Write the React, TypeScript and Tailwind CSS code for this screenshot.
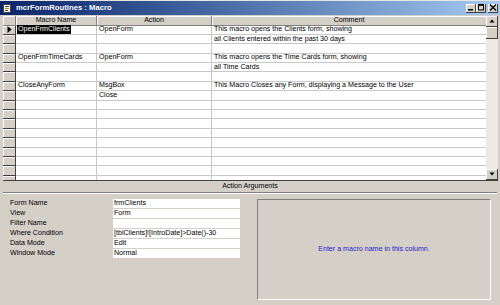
import React from 'react';

const rows: { name?: string; action?: string; comment?: string }[] = [
    { name: 'OpenFrmClients', action: 'OpenForm', comment: 'This macro opens the Clients form, showing' },
    { comment: 'all Clients entered within the past 30 days' },
    {},
    { name: 'OpenFrmTimeCards', action: 'OpenForm', comment: 'This macro opens the Time Cards form, showing' },
    { comment: 'all Time Cards' },
    {},
    { name: 'CloseAnyForm', action: 'MsgBox', comment: 'This Macro Closes any Form, displaying a Message to the User' },
    { action: 'Close' },
    {}, {}, {}, {}, {}, {}, {}, {}, {}, {},
];

const args = [
    { label: 'Form Name', value: 'frmClients' },
    { label: 'View', value: 'Form' },
    { label: 'Filter Name', value: '' },
    { label: 'Where Condition', value: '[tblClients]![IntroDate]>Date()-30' },
    { label: 'Data Mode', value: 'Edit' },
    { label: 'Window Mode', value: 'Normal' },
];

function TitleButton({ kind }: { kind: 'min' | 'max' | 'close' }) {
    return (
        <div className="w-[10px] h-[9px] bg-[#d4d0c8] border-r border-b border-[#404040] shadow-[inset_1px_1px_0_#fff] flex items-center justify-center">
            <svg width="8" height="7" viewBox="0 0 8 7">
                {kind === 'min' && <rect x="1" y="5" width="5" height="1.5" fill="#000" />}
                {kind === 'max' && (
                    <g fill="none" stroke="#000">
                        <rect x="1.5" y="0.5" width="5" height="5.5" />
                        <line x1="1.5" y1="1.3" x2="6.5" y2="1.3" />
                    </g>
                )}
                {kind === 'close' && (
                    <g stroke="#000" strokeWidth="1.3">
                        <line x1="1" y1="0.5" x2="7" y2="6.5" />
                        <line x1="7" y1="0.5" x2="1" y2="6.5" />
                    </g>
                )}
            </svg>
        </div>
    );
}

function ScrollArrow({ up }: { up?: boolean }) {
    return (
        <div className="h-[11px] bg-[#d4d0c8] border-r border-b border-[#404040] shadow-[inset_1px_1px_0_#fff] flex items-center justify-center shrink-0">
            <svg width="6" height="4" viewBox="0 0 6 4">
                <polygon points={up ? '3,0.5 0.5,3.5 5.5,3.5' : '0.5,0.5 5.5,0.5 3,3.5'} fill="#000" />
            </svg>
        </div>
    );
}

export default function App() {
    return (
        <div
            className="w-[500px] h-[305px] bg-[#d4d0c8] overflow-hidden flex flex-col text-[7.1px] text-black leading-none"
            style={{ fontFamily: '"Liberation Sans", Arial, sans-serif' }}
        >
            {/* title bar */}
            <div className="h-[15px] shrink-0 border-t border-[#e8e6e0] bg-gradient-to-r from-[#0a246a] to-[#a6caf0] flex items-center pl-[3px] pr-[2px]">
                <svg width="9" height="9" viewBox="0 0 9 9" className="shrink-0">
                    <rect x="0.5" y="0.5" width="7" height="8" fill="#fff" stroke="#404040" />
                    <rect x="2" y="2" width="4" height="1" fill="#404040" />
                    <rect x="2" y="4" width="4" height="1" fill="#c08000" />
                    <rect x="2" y="6" width="3" height="1" fill="#404040" />
                </svg>
                <span className="ml-[4px] text-white font-bold text-[7.7px]">mcrFormRoutines : Macro</span>
                <div className="ml-auto flex items-center">
                    <TitleButton kind="min" />
                    <TitleButton kind="max" />
                    <div className="w-[2px]" />
                    <TitleButton kind="close" />
                </div>
            </div>

            {/* macro grid */}
            <div className="h-[166px] shrink-0 flex pl-[3px] pr-[2px] pt-[1px]">
                <div className="flex-1 flex flex-col overflow-hidden bg-white border-b border-[#404040]">
                    <div className="h-[9.5px] shrink-0 flex bg-[#d4d0c8]">
                        <div className="w-[13px] shrink-0 border-r border-b border-[#808080] shadow-[inset_1px_1px_0_#fff]" />
                        <div className="w-[81px] shrink-0 border-r border-b border-[#808080] shadow-[inset_1px_1px_0_#fff] flex items-center justify-center">Macro Name</div>
                        <div className="w-[115px] shrink-0 border-r border-b border-[#808080] shadow-[inset_1px_1px_0_#fff] flex items-center justify-center">Action</div>
                        <div className="flex-1 border-b border-[#808080] shadow-[inset_1px_1px_0_#fff] flex items-center justify-center">Comment</div>
                    </div>
                    {rows.map((r, i) => (
                        <div key={i} className="h-[9.4px] shrink-0 flex">
                            <div className="w-[13px] shrink-0 bg-[#d4d0c8] border-r border-b border-[#404040] shadow-[inset_1px_1px_0_#fff] flex items-center justify-center">
                                {i === 0 && (
                                    <svg width="5" height="7" viewBox="0 0 5 7">
                                        <polygon points="0.5,0 4.5,3.5 0.5,7" fill="#000" />
                                    </svg>
                                )}
                            </div>
                            <div className="w-[81px] shrink-0 border-r border-b border-[#c8c8c8] flex items-center pl-[1px]">
                                {i === 0 ? (
                                    <span className="bg-black text-white px-[1px] py-[1px]">{r.name}</span>
                                ) : (
                                    <span className="pl-[1px]">{r.name}</span>
                                )}
                            </div>
                            <div className="w-[115px] shrink-0 border-r border-b border-[#c8c8c8] flex items-center pl-[2px]">{r.action}</div>
                            <div className="flex-1 border-b border-[#c8c8c8] flex items-center pl-[2px] whitespace-nowrap overflow-hidden">{r.comment}</div>
                        </div>
                    ))}
                </div>
                {/* vertical scrollbar */}
                <div className="w-[12px] shrink-0 flex flex-col bg-[#ece9e4] border-b border-[#404040]">
                    <ScrollArrow up />
                    <div className="h-[12px] shrink-0 bg-[#d4d0c8] border-r border-b border-[#404040] shadow-[inset_1px_1px_0_#fff]" />
                    <div className="flex-1" />
                    <ScrollArrow />
                </div>
            </div>

            {/* splitter */}
            <div className="h-[12px] shrink-0 flex items-center justify-center border-b border-[#808080] mx-[3px] pt-[1px]">
                Action Arguments
            </div>

            {/* arguments */}
            <div className="flex-1 flex border-t border-white mx-[3px]">
                <div className="w-[250px] shrink-0 flex flex-col pt-[5px] gap-[1px]">
                    {args.map((a) => (
                        <div key={a.label} className="h-[9px] flex items-center">
                            <div className="w-[110px] shrink-0 pl-[7px]">{a.label}</div>
                            <div className="w-[127px] h-[9px] bg-white flex items-center pl-[1px]">{a.value}</div>
                        </div>
                    ))}
                </div>
                <div className="flex-1 pt-[5px] pb-[5px] pl-[4px] pr-[6px]">
                    <div className="h-full border-t border-l border-[#808080] border-r border-b border-r-white border-b-white flex items-center justify-center text-[#2424c8]">
                        Enter a macro name in this column.
                    </div>
                </div>
            </div>
        </div>
    );
}
